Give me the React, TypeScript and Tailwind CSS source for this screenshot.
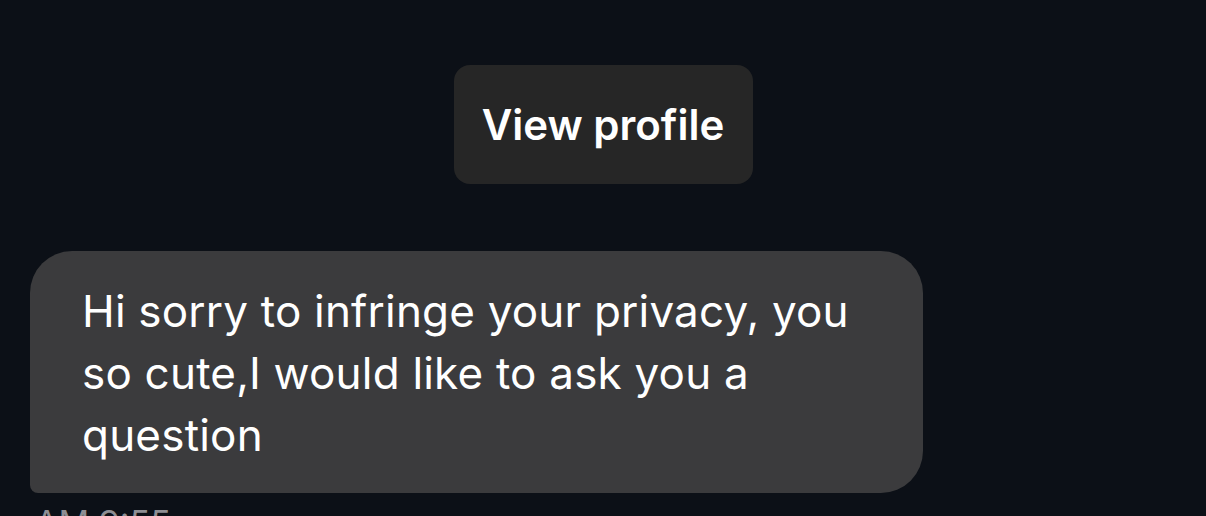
export default function App() {
  return (
    <div
      className="h-[516px] w-[1206px] overflow-hidden bg-[#0c1017] pt-[65px]"
      style={{ fontFamily: 'Inter, "Noto Sans", sans-serif' }}
    >
      <div className="flex justify-center">
        <button className="flex h-[119px] w-[299px] items-center justify-center rounded-[16px] bg-[#262626] text-[42px] font-semibold text-white">
          View profile
        </button>
      </div>

      <div className="mt-[67px] pl-[30px]">
        <div className="w-[893px] rounded-[42px] rounded-bl-[8px] bg-[#3b3b3d] pb-[27px] pl-[52px] pr-[30px] pt-[29px] text-[44px] leading-[62px] tracking-[0.2px] text-white">
          Hi sorry to infringe your privacy, you
          <br />
          so cute,I would like to ask you a
          <br />
          question
        </div>
        <div className="mt-[8px] pl-[5px] text-[34px] leading-[44px] text-[#8e8e93]">AM 9:55</div>
      </div>
    </div>
  )
}
